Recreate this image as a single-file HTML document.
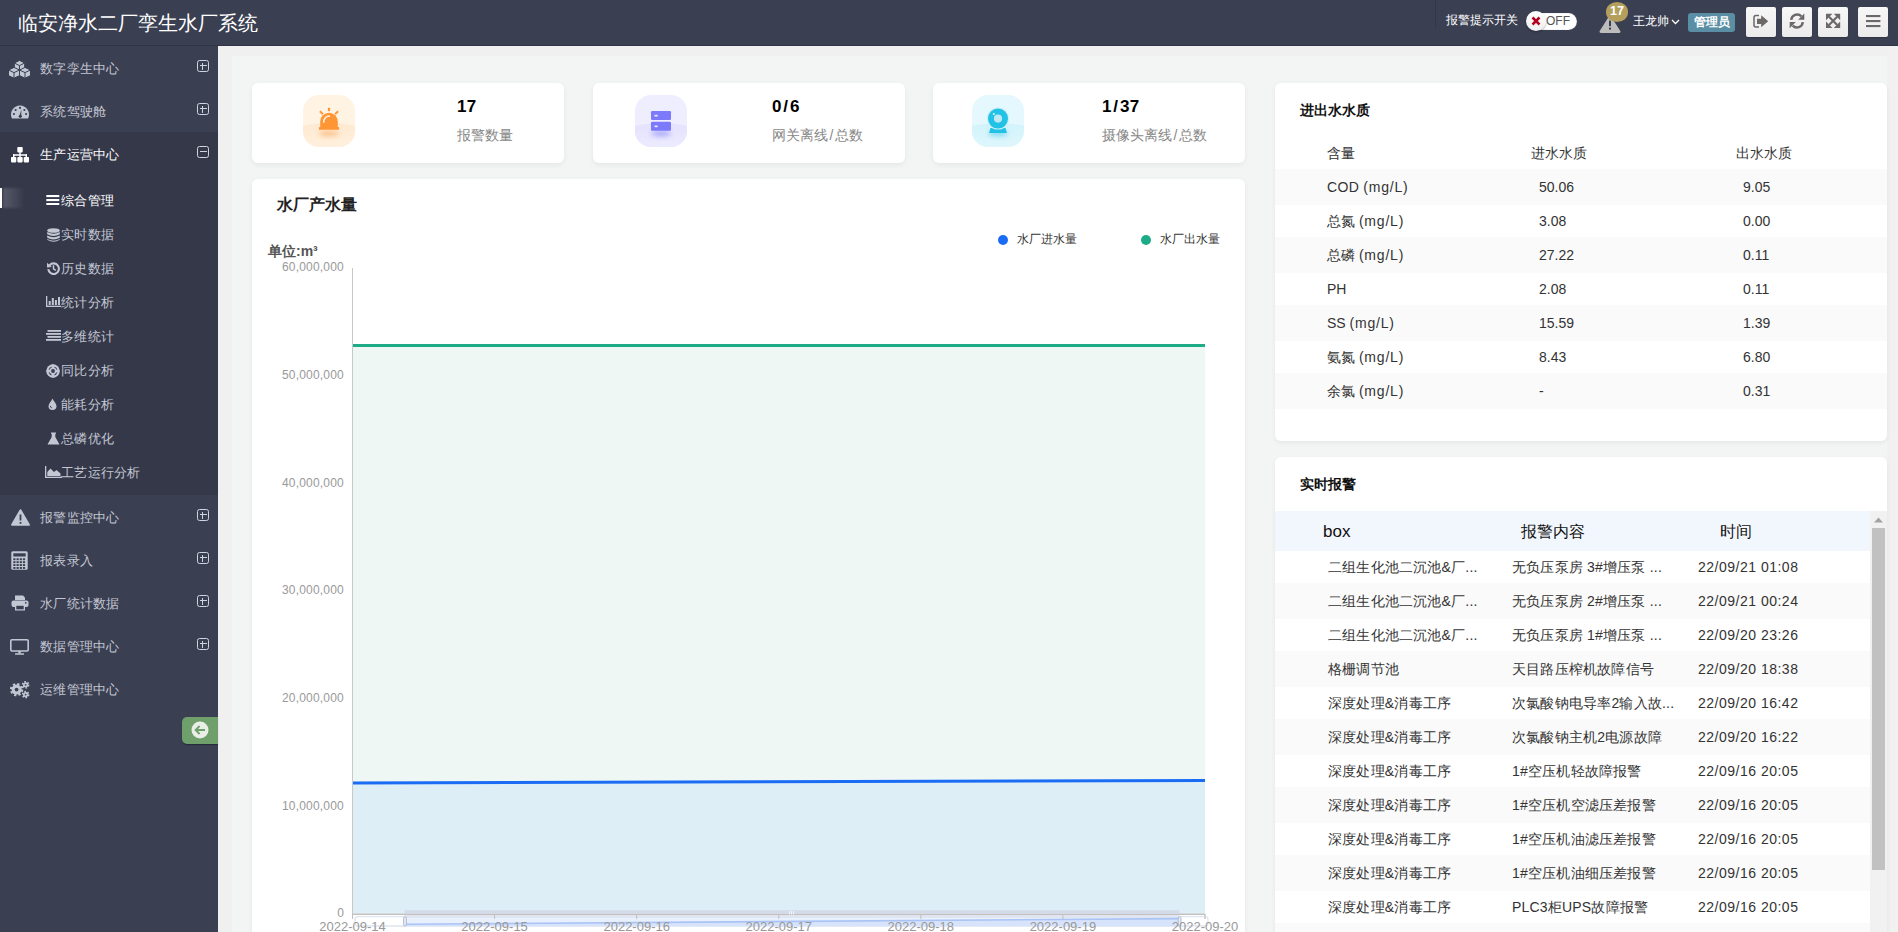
<!DOCTYPE html><html><head><meta charset="utf-8"><style>
*{box-sizing:border-box;margin:0;padding:0}
html,body{width:1898px;height:932px;overflow:hidden}
body{font-family:"Liberation Sans",sans-serif;background:#f3f4f4;position:relative;color:#333}
.a{position:absolute}
.nw{white-space:nowrap}
#hdr{position:absolute;left:0;top:0;width:1898px;height:46px;background:#3b3f52;border-bottom:1px solid #313446}
#title{position:absolute;left:18px;top:11px;font-size:20px;line-height:24px;color:#fff;white-space:nowrap}
#side{position:absolute;left:0;top:46px;width:218px;height:886px;background:#3b3f52}
.mi{position:absolute;left:0;width:218px;height:43px}

.mi .tx{position:absolute;left:40px;top:15px;font-size:13px;letter-spacing:0.3px;color:#c3c7d3;white-space:nowrap;line-height:15px}
.pm{position:absolute;left:197px;top:14px;width:12px;height:12px;border:1.4px solid #d0d3de;border-radius:2.5px}
.pm:before{content:"";position:absolute;left:1.5px;right:1.5px;top:4px;height:1.4px;background:#d0d3de}
.pm.p:after{content:"";position:absolute;top:1.5px;bottom:1.5px;left:4px;width:1.4px;background:#d0d3de}
.si{position:absolute;left:0;width:218px;height:34px}

.si .tx{position:absolute;left:61px;top:11px;font-size:13px;letter-spacing:0.3px;color:#c3c7d3;white-space:nowrap;line-height:15px}
.card{position:absolute;background:#fff;border-radius:6px;box-shadow:0 2px 5px rgba(0,0,0,0.06)}
.hbtn{position:absolute;top:7px;width:30px;height:30px;border-radius:2px;background:linear-gradient(#f7f7f7,#ebebeb);box-shadow:0 1px 1px rgba(0,0,0,.2)}
.hbtn svg{position:absolute;left:0;top:0}
.tbl td{position:absolute}
.row{position:absolute;left:0;width:612px;height:34px}
.row.s{background:#fafafa}
.row>span{position:absolute;top:9px;font-size:14px;line-height:16px;color:#333;white-space:nowrap}
.ar{position:absolute;left:0;width:595px;height:34px}
.ar.s{background:#fafafa}
.ar>span{position:absolute;top:9px;font-size:14px;line-height:16px;color:#333;white-space:nowrap}
.yl{position:absolute;right:0;font-size:12px;line-height:14px;color:#999;text-align:right;width:80px}
.xl{position:absolute;font-size:13px;line-height:14px;color:#999;white-space:nowrap;transform:translateX(-50%)}
</style></head><body>
<div class="a" style="left:218px;top:46px;width:14px;height:886px;background:#f0f0f0"></div>
<div class="a" style="left:218px;top:46px;width:1680px;height:10px;background:#f0f0f0"></div>
<div class="a" style="left:1887px;top:46px;width:11px;height:886px;background:#f1f1f1"></div>
<div id="hdr"><div id="title">临安净水二厂孪生水厂系统</div>
<div class="a" style="left:1435px;top:0;width:1px;height:29px;background:#34374a"></div>
<div class="a nw" style="left:1446px;top:13px;font-size:12px;line-height:15px;color:#fff">报警提示开关</div>
<div class="a" style="left:1527px;top:13px;width:50px;height:17px;border-radius:9px;background:#fff;box-shadow:inset 0 0 1px rgba(0,0,0,.4)"></div>
<div class="a nw" style="left:1546px;top:15px;font-size:12px;line-height:13px;color:#555">OFF</div>
<div class="a" style="left:1526px;top:11px;width:20px;height:20px;border-radius:50%;background:linear-gradient(#fff,#eee);box-shadow:0 1px 2px rgba(0,0,0,.35)"></div>
<svg class="a" style="left:1531px;top:16px" width="10" height="10" viewBox="0 0 10 10"><path d="M1.5 1.5 L8.5 8.5 M8.5 1.5 L1.5 8.5" stroke="#b3001f" stroke-width="2.5"/></svg>
<svg class="a" style="left:1599px;top:15px" width="23" height="19" viewBox="0 0 23 19"><path d="M11 2.2 L20.2 16.6 L1.8 16.6Z" fill="#bdbdbd" stroke="#bdbdbd" stroke-width="2.6" stroke-linejoin="round"/><rect x="10" y="5.6" width="2" height="5.6" fill="#3b3f52"/><rect x="10" y="12.6" width="2" height="2" fill="#3b3f52"/></svg>
<div class="a" style="left:1606px;top:2px;width:22px;height:19.5px;border-radius:50%;background:#b49f5d"></div>
<div class="a nw" style="left:1606px;top:4px;width:22px;text-align:center;font-size:12.5px;font-weight:bold;line-height:14px;color:#fff">17</div>
<div class="a nw" style="left:1633px;top:14px;font-size:12px;line-height:15px;color:#fff">王龙帅</div>
<svg class="a" style="left:1671px;top:19px" width="9" height="6" viewBox="0 0 9 6"><path d="M1 1 L4.5 4.5 L8 1" stroke="#fff" stroke-width="1.3" fill="none"/></svg>
<div class="a" style="left:1688px;top:13px;width:47px;height:19px;border-radius:3px;background:#5a8ea4"></div>
<div class="a nw" style="left:1688px;top:15px;width:47px;text-align:center;font-size:12px;font-weight:bold;line-height:15px;color:#fff">管理员</div>
<div class="hbtn" style="left:1746px"><svg width="30" height="30" viewBox="0 0 30 30"><path d="M13 8.6 H10 Q8 8.6 8 10.6 V18 Q8 20 10 20 H13" stroke="#6b6867" stroke-width="1.5" fill="none"/><path d="M11 11.7 H15.2 V8.3 L22.2 14.3 L15.2 20.3 V16.9 H11Z" fill="#6b6867"/></svg></div>
<div class="hbtn" style="left:1782px"><svg width="30" height="30" viewBox="0 0 30 30"><g stroke="#6b6867" stroke-width="2.4" fill="none"><path d="M9.2 12.9 A5.9 5.9 0 0 1 19.3 9.3"/><path d="M20.8 15.1 A5.9 5.9 0 0 1 10.7 18.7"/></g><g fill="#6b6867"><path d="M22.3 6.6 V12.7 H16.2Z"/><path d="M7.7 21.2 V15.1 H13.8Z"/></g></svg></div>
<div class="hbtn" style="left:1818px"><svg width="30" height="30" viewBox="0 0 30 30"><g stroke="#6b6867" stroke-width="2.1"><path d="M11 9.8 L19.2 18"/><path d="M19.2 9.8 L11 18"/></g><g fill="#6b6867"><path d="M8 6.8 H14.4 L8 13.2Z"/><path d="M22.2 6.8 V13.2 L15.8 6.8Z"/><path d="M8 21 V14.6 L14.4 21Z"/><path d="M22.2 21 H15.8 L22.2 14.6Z"/></g></svg></div>
<div class="hbtn" style="left:1858px"><svg width="30" height="30" viewBox="0 0 30 30"><g fill="#6b6867"><rect x="8" y="8" width="14.4" height="2.1"/><rect x="8" y="13" width="14.4" height="2.1"/><rect x="8" y="18" width="14.4" height="2.1"/></g></svg></div>
</div>
<div id="side">
<div class="mi" style="top:0px"><div class="a" style="left:8px;top:14px;line-height:0"><svg width="23" height="19" viewBox="0 0 23 19" ><path d="M6.3 3 L11.5 0.3999999999999999 L16.7 3 L16.7 8.6 L11.5 11.2 L6.3 8.6Z" fill="#c3c7d3" stroke="#3b3f52" stroke-width="1" stroke-linejoin="round"/><path d="M6.3 3 L11.5 5.6 L16.7 3 M11.5 5.6 L11.5 11.2" fill="none" stroke="#3b3f52" stroke-width="1"/><path d="M0.5 10 L6 7.4 L11.5 10 L11.5 15.6 L6 18.2 L0.5 15.6Z" fill="#c3c7d3" stroke="#3b3f52" stroke-width="1" stroke-linejoin="round"/><path d="M0.5 10 L6 12.6 L11.5 10 M6 12.6 L6 18.2" fill="none" stroke="#3b3f52" stroke-width="1"/><path d="M11.5 10 L17 7.4 L22.5 10 L22.5 15.6 L17 18.2 L11.5 15.6Z" fill="#c3c7d3" stroke="#3b3f52" stroke-width="1" stroke-linejoin="round"/><path d="M11.5 10 L17 12.6 L22.5 10 M17 12.6 L17 18.2" fill="none" stroke="#3b3f52" stroke-width="1"/></svg></div><div class="tx" style="color:#c3c7d3">数字孪生中心</div><div class="pm p"></div></div>
<div class="mi" style="top:43px"><div class="a" style="left:11px;top:16px;line-height:0"><svg width="18" height="14" viewBox="0 0 18 14" ><path d="M0.94 13.5 A9 9 0 1 1 17.06 13.5Z" fill="#c3c7d3"/>
<g fill="#3b3f52"><circle cx="9" cy="2.9" r="1.1"/><circle cx="4.6" cy="5" r="1.1"/><circle cx="13.4" cy="5" r="1.1"/><circle cx="2.9" cy="9" r="1.1"/><circle cx="15.1" cy="9" r="1.1"/>
<path d="M8.3 11.3 L10.4 4.6 L10.2 11.6Z"/><circle cx="9.3" cy="11.3" r="1.6"/></g></svg></div><div class="tx" style="color:#c3c7d3">系统驾驶舱</div><div class="pm p"></div></div>
<div class="a" style="left:0;top:86px;width:218px;height:363px;background:#353849"></div>
<div class="mi" style="top:86px"><div class="a" style="left:11px;top:15px;line-height:0"><svg width="18" height="16" viewBox="0 0 18 16" ><g fill="#fff"><rect x="6.3" y="0" width="5.4" height="5.4" rx="0.8"/><rect x="8.3" y="5" width="1.4" height="3"/>
<rect x="2" y="7.2" width="14" height="1.5" rx="0.5"/><rect x="2" y="7.2" width="1.5" height="3.5"/><rect x="8.3" y="7.2" width="1.4" height="3.5"/><rect x="14.5" y="7.2" width="1.5" height="3.5"/>
<rect x="0" y="10" width="5.3" height="5.4" rx="0.8"/><rect x="6.35" y="10" width="5.3" height="5.4" rx="0.8"/><rect x="12.7" y="10" width="5.3" height="5.4" rx="0.8"/></g></svg></div><div class="tx" style="color:#fff">生产运营中心</div><div class="pm"></div></div>
<div class="a" style="left:0;top:142px;width:2px;height:20px;background:#fff"></div>
<div class="a" style="left:3px;top:142px;width:22px;height:20px;background:linear-gradient(to right,rgba(255,255,255,.17),rgba(255,255,255,.1) 45%,rgba(255,255,255,0));filter:blur(1.2px)"></div>
<div class="si" style="top:136px"><div class="a" style="left:46px;top:12px;line-height:0"><svg width="14" height="11" viewBox="0 0 14 11" ><g fill="#ffffff"><rect x="0.3" y="1" width="13" height="2.1"/><rect x="0.3" y="5" width="13" height="2.1"/><rect x="0.3" y="9" width="13" height="2.1"/></g></svg></div><div class="tx" style="color:#fff">综合管理</div></div>
<div class="si" style="top:170px"><div class="a" style="left:47px;top:12px;line-height:0"><svg width="13" height="14" viewBox="0 0 13 14" ><g fill="#c3c7d3"><ellipse cx="6.5" cy="2.5" rx="6.3" ry="2.3"/><path d="M0.2 4 Q6.5 7.5 12.8 4 V6.3 Q6.5 9.8 0.2 6.3Z"/><path d="M0.2 7.5 Q6.5 11 12.8 7.5 V9.8 Q6.5 13.3 0.2 9.8Z"/><path d="M0.2 11 Q6.5 14.5 12.8 11 V11.8 Q6.5 15.5 0.2 11.8Z"/></g></svg></div><div class="tx" style="color:#c3c7d3">实时数据</div></div>
<div class="si" style="top:204px"><div class="a" style="left:47px;top:12px;line-height:0"><svg width="13" height="13" viewBox="0 0 13 13" ><path d="M2.6 3.2 A5.3 5.3 0 1 1 1.3 7.2" fill="none" stroke="#c3c7d3" stroke-width="2.1"/><path d="M0 0.8 L4.8 5 L0 5.5Z" fill="#c3c7d3"/><path d="M6.5 3.3 V6.8 L8.8 8.4" fill="none" stroke="#c3c7d3" stroke-width="1.5"/></svg></div><div class="tx" style="color:#c3c7d3">历史数据</div></div>
<div class="si" style="top:238px"><div class="a" style="left:46px;top:12px;line-height:0"><svg width="15" height="11" viewBox="0 0 15 11" ><g fill="#c3c7d3"><rect x="0" y="0" width="1.3" height="11"/><rect x="0" y="9.7" width="15" height="1.3"/><rect x="2.7" y="5" width="2" height="4"/><rect x="5.8" y="2" width="2" height="7"/><rect x="8.9" y="4" width="2" height="5"/><rect x="12" y="1" width="2" height="8"/></g></svg></div><div class="tx" style="color:#c3c7d3">统计分析</div></div>
<div class="si" style="top:272px"><div class="a" style="left:46px;top:12px;line-height:0"><svg width="15" height="11" viewBox="0 0 15 11" ><g fill="#c3c7d3"><rect x="1.5" y="0" width="13.5" height="1.8"/><rect x="0" y="3" width="15" height="1.8"/><rect x="1.5" y="6" width="13.5" height="1.8"/><rect x="0" y="9" width="15" height="1.8"/></g></svg></div><div class="tx" style="color:#c3c7d3">多维统计</div></div>
<div class="si" style="top:306px"><div class="a" style="left:46px;top:12px;line-height:0"><svg width="14" height="14" viewBox="0 0 14 14" ><circle cx="7" cy="7" r="6.7" fill="#c3c7d3"/><circle cx="7" cy="7" r="4.6" fill="#3b3f52"/><circle cx="7" cy="7" r="3.4" fill="#c3c7d3"/><circle cx="7" cy="7" r="1.9" fill="#3b3f52"/><g fill="#c3c7d3"><rect x="5.6" y="0.5" width="2.8" height="13"/><rect x="0.5" y="5.6" width="13" height="2.8"/></g><circle cx="7" cy="7" r="1.9" fill="#3b3f52"/><g fill="#3b3f52"><rect x="5.8" y="5.8" width="2.4" height="2.4" rx="1.2"/></g></svg></div><div class="tx" style="color:#c3c7d3">同比分析</div></div>
<div class="si" style="top:340px"><div class="a" style="left:48px;top:12px;line-height:0"><svg width="9" height="12" viewBox="0 0 9 12" ><path d="M4.5 0.5 C5.5 3 8.5 5.5 8.5 8 A4 4 0 0 1 0.5 8 C0.5 5.5 3.5 3 4.5 0.5Z" fill="#c3c7d3"/><path d="M2.3 7.8 A2.2 2.2 0 0 0 4 10" stroke="#3b3f52" stroke-width="0.9" fill="none"/></svg></div><div class="tx" style="color:#c3c7d3">能耗分析</div></div>
<div class="si" style="top:374px"><div class="a" style="left:47px;top:12px;line-height:0"><svg width="13" height="13" viewBox="0 0 13 13" ><path d="M4 0.5 H9 V1.8 H8.3 V5 L12.5 12.5 H0.5 L4.7 5 V1.8 H4Z" fill="#c3c7d3"/><path d="M5.8 2 V5.5 L3.5 9.5 H9.5 L7.2 5.5 V2Z" fill="#3b3f52" opacity="0.0"/></svg></div><div class="tx" style="color:#c3c7d3">总磷优化</div></div>
<div class="si" style="top:408px"><div class="a" style="left:45px;top:12px;line-height:0"><svg width="17" height="12" viewBox="0 0 17 12" ><g fill="#c3c7d3"><rect x="0" y="0" width="1.3" height="12"/><rect x="0" y="10.7" width="17" height="1.3"/><path d="M2.3 10 L2.3 6 L5.5 2.5 L9 6 L11.5 4 L15.5 7.5 V10Z"/></g></svg></div><div class="tx" style="color:#c3c7d3">工艺运行分析</div></div>
<div class="mi" style="top:449px"><div class="a" style="left:11px;top:14px;line-height:0"><svg width="19" height="17" viewBox="0 0 19 17" ><path d="M9.5 1.2 L17.9 15.8 L1.1 15.8Z" fill="#c3c7d3" stroke="#c3c7d3" stroke-width="2" stroke-linejoin="round"/>
<rect x="8.6" y="5.5" width="1.8" height="6" fill="#3b3f52"/><rect x="8.6" y="13" width="1.8" height="1.8" fill="#3b3f52"/></svg></div><div class="tx" style="color:#c3c7d3">报警监控中心</div><div class="pm p"></div></div>
<div class="mi" style="top:492px"><div class="a" style="left:11px;top:13px;line-height:0"><svg width="17" height="19" viewBox="0 0 17 19" ><rect x="0.3" y="0.3" width="16.4" height="18.4" rx="1.5" fill="#c3c7d3"/>
<rect x="2.3" y="2.3" width="12.4" height="3.2" fill="#3b3f52"/>
<g fill="#3b3f52"><rect x="2.3" y="7.3" width="2.2" height="1.9"/><rect x="5.5" y="7.3" width="2.2" height="1.9"/><rect x="8.7" y="7.3" width="2.2" height="1.9"/><rect x="11.9" y="7.3" width="2.2" height="1.9"/><rect x="2.3" y="10.2" width="2.2" height="1.9"/><rect x="5.5" y="10.2" width="2.2" height="1.9"/><rect x="8.7" y="10.2" width="2.2" height="1.9"/><rect x="11.9" y="10.2" width="2.2" height="1.9"/><rect x="2.3" y="13.1" width="2.2" height="1.9"/><rect x="5.5" y="13.1" width="2.2" height="1.9"/><rect x="8.7" y="13.1" width="2.2" height="1.9"/><rect x="11.9" y="13.1" width="2.2" height="1.9"/><rect x="2.3" y="16.0" width="2.2" height="1.9"/><rect x="5.5" y="16.0" width="2.2" height="1.9"/><rect x="8.7" y="16.0" width="2.2" height="1.9"/><rect x="11.9" y="16.0" width="2.2" height="1.9"/></g></svg></div><div class="tx" style="color:#c3c7d3">报表录入</div><div class="pm p"></div></div>
<div class="mi" style="top:535px"><div class="a" style="left:11px;top:14px;line-height:0"><svg width="18" height="16" viewBox="0 0 18 16" ><g fill="#c3c7d3"><path d="M4 0.5 H12 L14 2.5 V5 H4Z"/><rect x="0.5" y="5.5" width="17" height="6.5" rx="2"/><rect x="4" y="9.5" width="10" height="6"/></g>
<rect x="5.3" y="10.8" width="7.4" height="3.5" fill="#3b3f52"/><circle cx="14.8" cy="7.8" r="0.9" fill="#3b3f52"/></svg></div><div class="tx" style="color:#c3c7d3">水厂统计数据</div><div class="pm p"></div></div>
<div class="mi" style="top:578px"><div class="a" style="left:10px;top:15px;line-height:0"><svg width="19" height="16" viewBox="0 0 19 16" ><rect x="0.8" y="0.8" width="17.4" height="11.2" rx="1.2" fill="none" stroke="#c3c7d3" stroke-width="1.6"/>
<rect x="8.3" y="12" width="2.4" height="2.5" fill="#c3c7d3"/><rect x="5" y="14.3" width="9" height="1.4" rx="0.5" fill="#c3c7d3"/></svg></div><div class="tx" style="color:#c3c7d3">数据管理中心</div><div class="pm p"></div></div>
<div class="mi" style="top:621px"><div class="a" style="left:10px;top:14px;line-height:0"><svg width="20" height="18" viewBox="0 0 20 18" ><circle cx="6.6" cy="8.6" r="5.0" fill="#c3c7d3"/><circle cx="6.6" cy="8.6" r="5.7" fill="none" stroke="#c3c7d3" stroke-width="2.0" stroke-dasharray="2.238 2.238"/><circle cx="6.6" cy="8.6" r="1.9" fill="#3b3f52"/><circle cx="15.6" cy="3.8" r="2.6" fill="#c3c7d3"/><circle cx="15.6" cy="3.8" r="3.1" fill="none" stroke="#c3c7d3" stroke-width="1.5" stroke-dasharray="1.623 1.623"/><circle cx="15.6" cy="3.8" r="0.9" fill="#3b3f52"/><circle cx="15.6" cy="13.6" r="2.6" fill="#c3c7d3"/><circle cx="15.6" cy="13.6" r="3.1" fill="none" stroke="#c3c7d3" stroke-width="1.5" stroke-dasharray="1.623 1.623"/><circle cx="15.6" cy="13.6" r="0.9" fill="#3b3f52"/></svg></div><div class="tx" style="color:#c3c7d3">运维管理中心</div></div>
<div class="a" style="left:182px;top:671px;width:36px;height:27px;background:#6f9f6a;border-radius:5px 0 0 5px;box-shadow:0 1px 1px rgba(0,0,0,.35)"></div>
<svg class="a" style="left:191px;top:675px" width="18" height="18" viewBox="0 0 18 18"><circle cx="9" cy="9" r="8.5" fill="#e9efe7"/><path d="M14 9 H4.8 M8.6 5 L4.6 9 L8.6 13" stroke="#6f9f6a" stroke-width="1.8" fill="none"/></svg>
</div>
<div class="card" style="left:252px;top:83px;width:312px;height:80px"></div>
<div class="a" style="left:303px;top:95px;width:52px;height:52px;border-radius:16px;overflow:hidden;background:#fff3e3"><div class="a" style="left:-34px;top:27.5px;width:120px;height:60px;border-radius:50%;background:linear-gradient(#ffe9d0,#fff3e3 55%)"></div><div class="a" style="left:16px;top:36px;width:20px;height:5px;border-radius:50%;background:rgba(255,150,60,.55);filter:blur(2.5px)"></div><svg width="52" height="52" viewBox="0 0 52 52" style="position:absolute;left:0;top:0"><g fill="#ff9636"><rect x="24.9" y="12.8" width="2.2" height="3.3"/><path d="M17.6 15.6 L20.6 18.4 L19.2 19.8 L16.2 17Z"/><path d="M34.4 15.6 L31.4 18.4 L32.8 19.8 L35.8 17Z"/><path d="M17.2 33 V26.5 A8.8 8.8 0 0 1 34.8 26.5 V33Z"/><rect x="16" y="32" width="20" height="2.8" rx="0.4"/></g><path d="M20.8 27.2 A5.4 5.4 0 0 1 26.3 21.2" stroke="#ffead6" stroke-width="1.7" fill="none" stroke-linecap="round"/></svg></div>
<div class="a nw" style="left:457px;top:97px;font-size:17px;font-weight:bold;line-height:19px;color:#000;letter-spacing:0.3px">17</div>
<div class="a nw" style="left:457px;top:127px;font-size:14px;line-height:17px;color:#888">报警数量</div>
<div class="card" style="left:593px;top:83px;width:312px;height:80px"></div>
<div class="a" style="left:635px;top:95px;width:52px;height:52px;border-radius:16px;overflow:hidden;background:#efeefe"><div class="a" style="left:-34px;top:27.5px;width:120px;height:60px;border-radius:50%;background:linear-gradient(#e4e2fd,#efeefe 55%)"></div><div class="a" style="left:16px;top:36px;width:20px;height:5px;border-radius:50%;background:rgba(120,115,250,.6);filter:blur(2.5px)"></div><svg width="52" height="52" viewBox="0 0 52 52" style="position:absolute;left:0;top:0"><rect x="16" y="16" width="20" height="9" rx="1.2" fill="#7c79fb"/><rect x="16" y="26.7" width="20" height="9" rx="1.2" fill="#7c79fb"/><rect x="19.5" y="19.8" width="3.2" height="1.7" fill="#eceaff"/><rect x="19.5" y="30.5" width="3.2" height="1.7" fill="#eceaff"/></svg></div>
<div class="a nw" style="left:772px;top:97px;font-size:17px;font-weight:bold;line-height:19px;color:#000;letter-spacing:0.3px">0<span style="margin:0 1.6px">/</span>6</div>
<div class="a nw" style="left:772px;top:127px;font-size:14px;line-height:17px;color:#888">网关离线<span style="margin:0 1.6px">/</span>总数</div>
<div class="card" style="left:933px;top:83px;width:312px;height:80px"></div>
<div class="a" style="left:972px;top:95px;width:52px;height:52px;border-radius:16px;overflow:hidden;background:#e4f8fd"><div class="a" style="left:-34px;top:27.5px;width:120px;height:60px;border-radius:50%;background:linear-gradient(#d2f3fb,#e4f8fd 55%)"></div><div class="a" style="left:16px;top:36px;width:20px;height:5px;border-radius:50%;background:rgba(40,190,230,.55);filter:blur(2.5px)"></div><svg width="52" height="52" viewBox="0 0 52 52" style="position:absolute;left:0;top:0"><path d="M17 38 L18.5 33 L33.5 33 L35 38Z" fill="#22c2e6"/><circle cx="26" cy="23.6" r="11" fill="#c9eff9"/><circle cx="26" cy="23.6" r="10" fill="#22c2e6"/><circle cx="26" cy="23.6" r="4.1" fill="#bfe9f5"/><circle cx="21.8" cy="19" r="1" fill="#ecfbff"/></svg></div>
<div class="a nw" style="left:1102px;top:97px;font-size:17px;font-weight:bold;line-height:19px;color:#000;letter-spacing:0.3px">1<span style="margin:0 1.6px">/</span>37</div>
<div class="a nw" style="left:1102px;top:127px;font-size:14px;line-height:17px;color:#888">摄像头离线<span style="margin:0 1.6px">/</span>总数</div>
<div class="card" style="left:252px;top:179px;width:993px;height:800px"></div>
<div class="a nw" style="left:277px;top:196px;font-size:16px;font-weight:bold;line-height:18px;color:#222">水厂产水量</div>
<div class="a" style="left:998px;top:235px;width:10px;height:10px;border-radius:50%;background:#1a6cf5"></div>
<div class="a nw" style="left:1017px;top:232px;font-size:12px;line-height:14px;color:#333">水厂进水量</div>
<div class="a" style="left:1141px;top:235px;width:10px;height:10px;border-radius:50%;background:#1eab88"></div>
<div class="a nw" style="left:1160px;top:232px;font-size:12px;line-height:14px;color:#333">水厂出水量</div>
<div class="a nw" style="left:268px;top:244px;font-size:14px;font-weight:bold;line-height:15px;color:#555">单位:m³</div>
<svg class="a" style="left:0;top:0" width="1898" height="932" viewBox="0 0 1898 932"><path d="M352.5 345.5 L1205 345.5 L1205 914 L352.5 914Z" fill="#eef7f4"/><path d="M352.5 783 L1205 780.5 L1205 914 L352.5 914Z" fill="#ddeef6"/><path d="M352.5 345.5 L1205 345.5" stroke="#1eab88" stroke-width="3"/><path d="M352.5 783 L1205 780.5" stroke="#1a6cf5" stroke-width="3"/><path d="M352.5 268 V914" stroke="#c8c8c8" stroke-width="1"/><path d="M352.0 914 H1205" stroke="#ccc" stroke-width="1"/><path d="M352.5 914 V919" stroke="#ccc" stroke-width="1"/><path d="M494.58333333333337 914 V919" stroke="#ccc" stroke-width="1"/><path d="M636.6666666666667 914 V919" stroke="#ccc" stroke-width="1"/><path d="M778.75 914 V919" stroke="#ccc" stroke-width="1"/><path d="M920.8333333333334 914 V919" stroke="#ccc" stroke-width="1"/><path d="M1062.9166666666665 914 V919" stroke="#ccc" stroke-width="1"/><path d="M1205.0 914 V919" stroke="#ccc" stroke-width="1"/><rect x="355" y="916.6" width="853" height="9.4" rx="3" fill="none" stroke="#dfe5f0" stroke-width="1.3"/><rect x="404.5" y="910.2" width="775" height="4.2" fill="#d3dbe9"/><rect x="404.5" y="914.6" width="775" height="3.6" fill="#dfe6f1"/><rect x="404.5" y="918.2" width="775" height="8" fill="#e8effd"/><path d="M404.5 924.3 L1179.5 918.6 L1179.5 926.2 L404.5 926.2Z" fill="#d7e3fb"/><path d="M404.5 924.3 L1179.5 918.6" stroke="#a9c3f5" stroke-width="1.6"/><rect x="403.6" y="916.8" width="2.8" height="9.2" rx="1.4" fill="#e6ecf7" stroke="#aab6cf" stroke-width="0.9"/><rect x="1178.2" y="916.8" width="2.8" height="9.2" rx="1.4" fill="#e6ecf7" stroke="#aab6cf" stroke-width="0.9"/><path d="M352.0 914.5 H1205" stroke="#c4bfba" stroke-width="1.2"/><g stroke="#f4f6fb" stroke-width="0.9"><path d="M789.5 911 V914.5"/><path d="M791.5 911 V914.5"/><path d="M793.5 911 V914.5"/></g><path d="M352.5 914 V919" stroke="#c4bfba" stroke-width="1"/><path d="M494.58333333333337 914 V919" stroke="#c4bfba" stroke-width="1"/><path d="M636.6666666666667 914 V919" stroke="#c4bfba" stroke-width="1"/><path d="M778.75 914 V919" stroke="#c4bfba" stroke-width="1"/><path d="M920.8333333333334 914 V919" stroke="#c4bfba" stroke-width="1"/><path d="M1062.9166666666665 914 V919" stroke="#c4bfba" stroke-width="1"/><path d="M1205.0 914 V919" stroke="#c4bfba" stroke-width="1"/></svg>
<div class="a nw" style="left:243px;top:260.2px;width:101px;text-align:right;font-size:12px;line-height:14px;color:#999;letter-spacing:0.2px">60,000,000</div>
<div class="a nw" style="left:243px;top:367.9px;width:101px;text-align:right;font-size:12px;line-height:14px;color:#999;letter-spacing:0.2px">50,000,000</div>
<div class="a nw" style="left:243px;top:475.5px;width:101px;text-align:right;font-size:12px;line-height:14px;color:#999;letter-spacing:0.2px">40,000,000</div>
<div class="a nw" style="left:243px;top:583.2px;width:101px;text-align:right;font-size:12px;line-height:14px;color:#999;letter-spacing:0.2px">30,000,000</div>
<div class="a nw" style="left:243px;top:690.9px;width:101px;text-align:right;font-size:12px;line-height:14px;color:#999;letter-spacing:0.2px">20,000,000</div>
<div class="a nw" style="left:243px;top:798.5px;width:101px;text-align:right;font-size:12px;line-height:14px;color:#999;letter-spacing:0.2px">10,000,000</div>
<div class="a nw" style="left:243px;top:906.2px;width:101px;text-align:right;font-size:12px;line-height:14px;color:#999;letter-spacing:0.2px">0</div>
<div class="xl" style="left:352.5px;top:920px">2022-09-14</div>
<div class="xl" style="left:494.6px;top:920px">2022-09-15</div>
<div class="xl" style="left:636.7px;top:920px">2022-09-16</div>
<div class="xl" style="left:778.8px;top:920px">2022-09-17</div>
<div class="xl" style="left:920.8px;top:920px">2022-09-18</div>
<div class="xl" style="left:1062.9px;top:920px">2022-09-19</div>
<div class="xl" style="left:1205.0px;top:920px">2022-09-20</div>
<div class="card" style="left:1275px;top:83px;width:612px;height:358px;overflow:hidden">
<div class="a nw" style="left:25px;top:19px;font-size:14px;font-weight:bold;line-height:16px;color:#111">进出水水质</div>
<div class="a" style="left:0;top:86px;width:612px;height:36px;background:#fafafa"></div>
<div class="a" style="left:0;top:154px;width:612px;height:36px;background:#fafafa"></div>
<div class="a" style="left:0;top:222px;width:612px;height:36px;background:#fafafa"></div>
<div class="a" style="left:0;top:290px;width:612px;height:36px;background:#fafafa"></div>
<div class="row" style="top:53px"><span style="left:52px">含量</span><span style="left:256px">进水水质</span><span style="left:461px">出水水质</span></div>
<div class="row" style="top:87px"><span style="left:52px"><span style="letter-spacing:0.4px">COD</span> <span style="letter-spacing:0.8px">(mg/L)</span></span><span style="left:264px">50.06</span><span style="left:468px">9.05</span></div>
<div class="row" style="top:121px"><span style="left:52px">总氮 <span style="letter-spacing:0.8px">(mg/L)</span></span><span style="left:264px">3.08</span><span style="left:468px">0.00</span></div>
<div class="row" style="top:155px"><span style="left:52px">总磷 <span style="letter-spacing:0.8px">(mg/L)</span></span><span style="left:264px">27.22</span><span style="left:468px">0.11</span></div>
<div class="row" style="top:189px"><span style="left:52px">PH</span><span style="left:264px">2.08</span><span style="left:468px">0.11</span></div>
<div class="row" style="top:223px"><span style="left:52px">SS <span style="letter-spacing:0.8px">(mg/L)</span></span><span style="left:264px">15.59</span><span style="left:468px">1.39</span></div>
<div class="row" style="top:257px"><span style="left:52px">氨氮 <span style="letter-spacing:0.8px">(mg/L)</span></span><span style="left:264px">8.43</span><span style="left:468px">6.80</span></div>
<div class="row" style="top:291px"><span style="left:52px">余氯 <span style="letter-spacing:0.8px">(mg/L)</span></span><span style="left:264px">-</span><span style="left:468px">0.31</span></div>
</div>
<div class="card" style="left:1275px;top:457px;width:612px;height:520px;overflow:hidden">
<div class="a nw" style="left:25px;top:19px;font-size:14px;font-weight:bold;line-height:16px;color:#111">实时报警</div>
<div class="a" style="left:0;top:54px;width:595px;height:40px;background:#f2f7fd"></div>
<div class="a nw" style="left:48px;top:65px;font-size:17px;line-height:19px;color:#111">box</div>
<div class="a nw" style="left:246px;top:65px;font-size:16px;line-height:19px;color:#111">报警内容</div>
<div class="a nw" style="left:445px;top:65px;font-size:16px;line-height:19px;color:#111">时间</div>
<div class="a" style="left:0;top:126px;width:595px;height:36px;background:#fafafa"></div>
<div class="a" style="left:0;top:194px;width:595px;height:36px;background:#fafafa"></div>
<div class="a" style="left:0;top:262px;width:595px;height:36px;background:#fafafa"></div>
<div class="a" style="left:0;top:330px;width:595px;height:36px;background:#fafafa"></div>
<div class="a" style="left:0;top:398px;width:595px;height:36px;background:#fafafa"></div>
<div class="a" style="left:0;top:466px;width:595px;height:36px;background:#fafafa"></div>
<div class="ar" style="top:93px"><span style="left:53px;letter-spacing:0.2px">二组生化池二沉池&amp;厂...</span><span style="left:237px;letter-spacing:0.2px">无负压泵房 3#增压泵 ...</span><span style="left:423px;letter-spacing:0.5px">22/09/21 01:08</span></div>
<div class="ar" style="top:127px"><span style="left:53px;letter-spacing:0.2px">二组生化池二沉池&amp;厂...</span><span style="left:237px;letter-spacing:0.2px">无负压泵房 2#增压泵 ...</span><span style="left:423px;letter-spacing:0.5px">22/09/21 00:24</span></div>
<div class="ar" style="top:161px"><span style="left:53px;letter-spacing:0.2px">二组生化池二沉池&amp;厂...</span><span style="left:237px;letter-spacing:0.2px">无负压泵房 1#增压泵 ...</span><span style="left:423px;letter-spacing:0.5px">22/09/20 23:26</span></div>
<div class="ar" style="top:195px"><span style="left:53px;letter-spacing:0.2px">格栅调节池</span><span style="left:237px;letter-spacing:0.2px">天目路压榨机故障信号</span><span style="left:423px;letter-spacing:0.5px">22/09/20 18:38</span></div>
<div class="ar" style="top:229px"><span style="left:53px;letter-spacing:0.2px">深度处理&amp;消毒工序</span><span style="left:237px;letter-spacing:0.2px">次氯酸钠电导率2输入故...</span><span style="left:423px;letter-spacing:0.5px">22/09/20 16:42</span></div>
<div class="ar" style="top:263px"><span style="left:53px;letter-spacing:0.2px">深度处理&amp;消毒工序</span><span style="left:237px;letter-spacing:0.2px">次氯酸钠主机2电源故障</span><span style="left:423px;letter-spacing:0.5px">22/09/20 16:22</span></div>
<div class="ar" style="top:297px"><span style="left:53px;letter-spacing:0.2px">深度处理&amp;消毒工序</span><span style="left:237px;letter-spacing:0.2px">1#空压机轻故障报警</span><span style="left:423px;letter-spacing:0.5px">22/09/16 20:05</span></div>
<div class="ar" style="top:331px"><span style="left:53px;letter-spacing:0.2px">深度处理&amp;消毒工序</span><span style="left:237px;letter-spacing:0.2px">1#空压机空滤压差报警</span><span style="left:423px;letter-spacing:0.5px">22/09/16 20:05</span></div>
<div class="ar" style="top:365px"><span style="left:53px;letter-spacing:0.2px">深度处理&amp;消毒工序</span><span style="left:237px;letter-spacing:0.2px">1#空压机油滤压差报警</span><span style="left:423px;letter-spacing:0.5px">22/09/16 20:05</span></div>
<div class="ar" style="top:399px"><span style="left:53px;letter-spacing:0.2px">深度处理&amp;消毒工序</span><span style="left:237px;letter-spacing:0.2px">1#空压机油细压差报警</span><span style="left:423px;letter-spacing:0.5px">22/09/16 20:05</span></div>
<div class="ar" style="top:433px"><span style="left:53px;letter-spacing:0.2px">深度处理&amp;消毒工序</span><span style="left:237px;letter-spacing:0.2px">PLC3柜UPS故障报警</span><span style="left:423px;letter-spacing:0.5px">22/09/16 20:05</span></div>
<div class="ar" style="top:467px"><span style="left:53px;letter-spacing:0.2px">深度处理&amp;消毒工序</span><span style="left:237px;letter-spacing:0.2px">PLC3柜UPS故障报警</span><span style="left:423px;letter-spacing:0.5px">22/09/16 20:05</span></div>
<div class="a" style="left:0;top:54px;width:595px;height:40px;background:#f2f7fd"></div>
<div class="a nw" style="left:48px;top:65px;font-size:17px;line-height:19px;color:#111">box</div>
<div class="a nw" style="left:246px;top:65px;font-size:16px;line-height:19px;color:#111">报警内容</div>
<div class="a nw" style="left:445px;top:65px;font-size:16px;line-height:19px;color:#111">时间</div>
<div class="a" style="left:595px;top:54px;width:17px;height:470px;background:#f1f1f1"></div>
<svg class="a" style="left:598px;top:60px" width="11" height="6" viewBox="0 0 11 6"><path d="M1 5.5 L5.5 0.5 L10 5.5Z" fill="#a3a3a3"/></svg>
<div class="a" style="left:597px;top:71px;width:13px;height:342px;background:#c1c1c1"></div>
</div>
</body></html>
